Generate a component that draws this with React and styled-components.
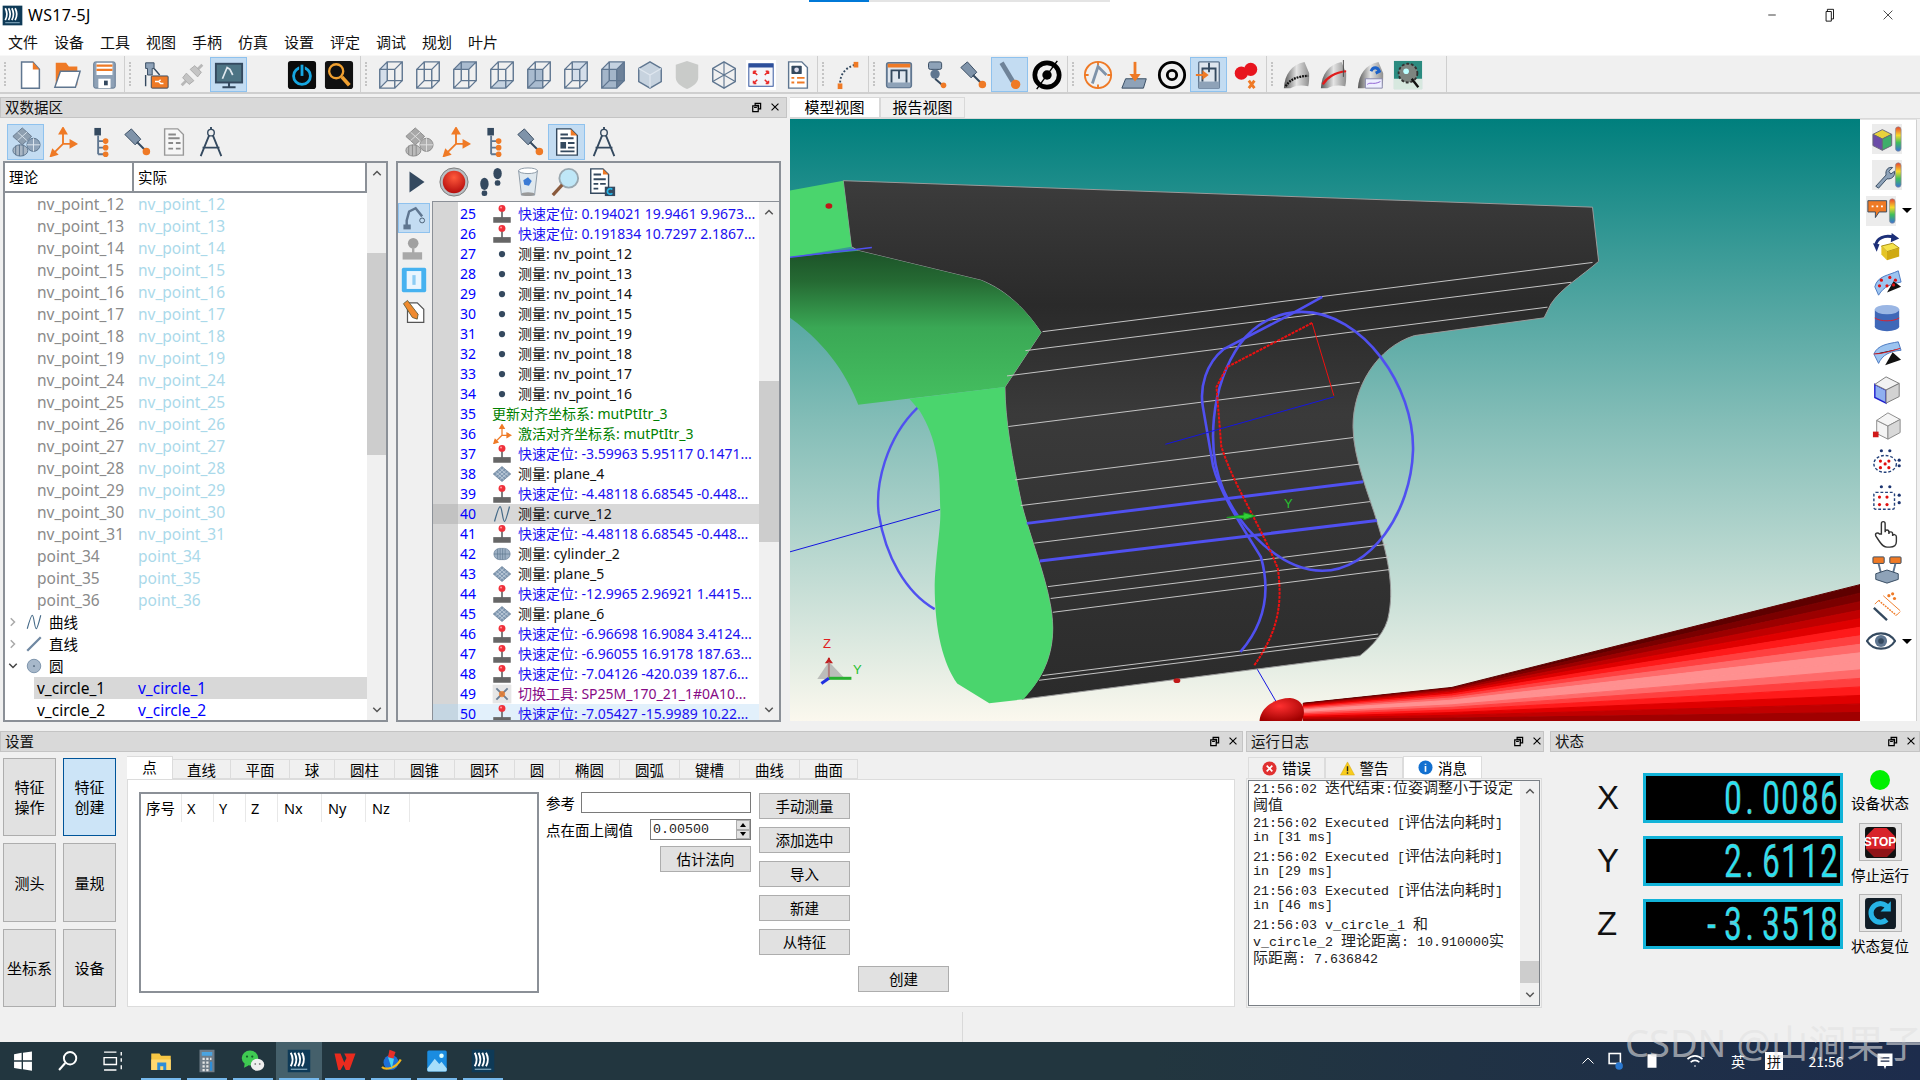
import React from 'react'
import styled, { createGlobalStyle } from 'styled-components'

const UI = `"Noto Sans","Noto Sans CJK SC",sans-serif`
const CJK = `"Noto Sans CJK SC","Noto Sans",sans-serif`
const MONO = `"Liberation Mono","Noto Sans CJK SC",monospace`
const SL = '#5f7690'
const SD = '#34495f'
const OR = '#ef7a26'

const Global = createGlobalStyle`
  * { box-sizing: border-box; }
  html, body { margin: 0; width: 1920px; height: 1080px; overflow: hidden; background: #f0f0f0; }
  body { font-family: ${UI}; color: #000; }
`

const cubeLines = <path d="M4 10h16v20H4zM12 2h16v20H12zM4 10l8-8M20 10l8-8M20 30l8-8M4 30l8-8" fill="none" stroke={SL} strokeWidth="1.5" />
const cube = (pts, fill = '#a9bbcf') => <>{pts && <polygon points={pts} fill={fill} />}{cubeLines}</>
const ws = (
  <>
    <rect x="1" y="1" width="30" height="30" fill="#0e3a57" />
    <path d="M5 5q5 9 0 18M10 5q5 9 0 18M15 5q5 9 0 18M20 5q5 9 0 18" fill="none" stroke="#fff" strokeWidth="2.6" />
    <path d="M5 27h22" stroke="#8fb4c9" strokeWidth="1.5" />
  </>
)
const pin = (
  <>
    <path d="M16 10v14" stroke="#777" strokeWidth="3" />
    <circle cx="16" cy="7" r="5.5" fill="#f0303a" />
    <circle cx="14.5" cy="5.5" r="1.6" fill="#ff9da0" />
    <rect x="2" y="21" width="28" height="9" fill="#666" />
  </>
)
const wave = <path d="M4 28C9 10 11 4 13 4c3 0 4 24 7 24 2 0 5-12 8-24" fill="none" stroke="#456a88" strokeWidth="2" />
const axes = <path d="M16 18V4M16 18l11 0M16 18L5 29M16 1l-3.5 6h7zM30 18l-6-3.5v7zM3 31l6.5-2-4.500-4.500z" fill={OR} stroke={OR} strokeWidth="2" />
const probe = (
  <>
    <path d="M3 8l7-6 10 11-6 6z" fill="#7f93a9" stroke={SD} strokeWidth="1" />
    <path d="M16 16l8 8" stroke={SD} strokeWidth="2" />
    <circle cx="26" cy="26" r="4" fill={OR} />
  </>
)
const machine = (
  <>
    <rect x="3" y="3" width="26" height="26" rx="2" fill="#dfe6ee" stroke={SL} strokeWidth="2" />
    <rect x="4" y="4" width="24" height="4" fill={OR} />
    <rect x="4" y="24" width="24" height="5" fill="#8ea2b8" />
    <path d="M8 24V11h16v13M16 11v9" fill="none" stroke={SD} strokeWidth="2" />
  </>
)
const plane = (
  <>
    <polygon points="16,4 30,16 16,28 2,16" fill="#7f97b0" stroke="#5c738c" />
    <path d="M9 10l14 12M12.500 7l14 12M5.500 13l14 12M23 10L9 22M19.500 7l-14 12M26.500 13l-14 12" stroke="#d8e2ec" strokeWidth="1" />
  </>
)
const rainbow = (x, y = 3, h = 26) => (
  <>
    <defs>
      <linearGradient id="rb" x1="0" y1="0" x2="0" y2="1">
        <stop offset="0" stopColor="#e8412f" /><stop offset=".35" stopColor="#f7d92c" /><stop offset=".65" stopColor="#3fbf5a" /><stop offset="1" stopColor="#3a6fd8" />
      </linearGradient>
    </defs>
    <rect x={x} y={y} width="6" height={h} rx="3" fill="url(#rb)" stroke="#8a8f96" strokeWidth=".7" />
  </>
)
const dots = (a) => a.map(([x, y, c], i) => <circle key={i} cx={x} cy={y} r="1.700" fill={c} />)
const bladeShape = 'M2 30C3 15 10 5 24 2l5 12c0 6 0 10-1 14-9-2-15 0-19 2z'

const icons = {
  fileNew: <><path d="M7 2h12l7 8v20H7z" fill="#fff" stroke={SL} strokeWidth="1.6" /><path d="M19 2v8h7z" fill={OR} /></>,
  fileOpen: <><path d="M4 3h11l3 4h9v20H4z" fill={OR} /><path d="M9 12h21l-5 17H3z" fill="#fff" stroke={SL} strokeWidth="1.5" /></>,
  save: <><rect x="5" y="2" width="23" height="28" rx="2" fill="#8ea1b6" stroke={SL} /><rect x="8" y="3" width="17" height="13" fill="#fff" /><path d="M8 6h17M8 10.500h17" stroke={OR} strokeWidth="2.400" /><rect x="10" y="20" width="13" height="10" fill="#fff" /><rect x="16" y="22" width="4" height="5" fill={SD} /></>,
  robotTool: <><path d="M6 3h9v6h-2v7H8V9H6z" fill="#8ea2b8" stroke={SD} /><path d="M6 16v12M15 9l6 7" stroke={SD} strokeWidth="1.500" /><rect x="12" y="17" width="18" height="13" rx="1" fill={OR} stroke={SD} /><path d="M16 23h4l2-2M20 23l2 2h3" stroke="#fff" strokeWidth="1.500" fill="none" /></>,
  plug: <><path d="M5 27l7-7M27 5l-7 7" stroke="#b8b8b8" strokeWidth="3" /><path d="M10 14l8 8-5 4-7-7zM22 18l-8-8 5-4 7 7z" fill="#c4c4c4" stroke="#aaa" /></>,
  monitor: <><rect x="2" y="4" width="28" height="20" fill="#4d7484" stroke={SD} strokeWidth="2" /><path d="M9 20l5-12 3 2 3 6" fill="none" stroke="#e0e8ee" strokeWidth="1.800" /><path d="M16 24v4M9 29h14" stroke={SD} strokeWidth="2.200" /></>,
  power: <><rect x="1" y="1" width="30" height="30" rx="3" fill="#0b0b0b" /><circle cx="16" cy="17" r="9" fill="none" stroke="#16a6e0" strokeWidth="3" /><path d="M16 5v13" stroke="#0b0b0b" strokeWidth="6" /><path d="M16 5v12" stroke="#16a6e0" strokeWidth="3" /></>,
  searchBlk: <><rect x="1" y="1" width="30" height="30" rx="3" fill="#111" /><circle cx="13" cy="12" r="7.500" fill="none" stroke="#f0a030" strokeWidth="2.500" /><path d="M19 18l8 9" stroke="#f0a030" strokeWidth="4" /></>,
  c1: cube('4,10 12,2 12,22 4,30', '#d4deea'),
  c2: cube(null),
  c3: cube('4,10 12,2 28,2 20,10'),
  c4: cube('4,30 12,22 28,22 20,30', '#c5d2e0'),
  c5: cube('4,10 20,10 20,30 4,30'),
  c6: cube('12,2 28,2 28,22 12,22', '#d4deea'),
  c7: <><polygon points="4,10 20,10 20,30 4,30" fill="#a3b5c9" /><polygon points="4,10 12,2 28,2 20,10" fill="#c5d2e0" /><polygon points="20,10 28,2 28,22 20,30" fill="#6d8199" />{cubeLines}</>,
  hex: <><polygon points="16,2 28,9 28,23 16,30 4,23 4,9" fill="#c7d3df" stroke={SL} strokeWidth="1.500" /><path d="M4 9l12 7 12-7M16 16v14" stroke="#dfe7ef" strokeWidth="1.200" fill="none" /></>,
  shield: <path d="M16 1l12 4v14c0 6-7 10-12 12C11 29 4 25 4 19V5z" fill="#c9cbc9" />,
  wire: <><polygon points="16,2 28,9 28,23 16,30 4,23 4,9" fill="none" stroke={SL} strokeWidth="1.500" /><path d="M4 9l24 14M28 9L4 23M16 2v28" stroke={SL} strokeWidth="1.200" /></>,
  full: <><rect x="0" y="0" width="32" height="32" fill="#fff" /><rect x="3" y="4" width="26" height="24" fill="#f4f6fb" stroke="#2d4f9b" /><rect x="3" y="4" width="26" height="4" fill="#2d4f9b" /><path d="M8 12l4 4M8 12h3M8 12v3M24 12l-4 4M24 12h-3M24 12v3M8 25l4-4M8 25h3M8 25v-3M24 25l-4-4M24 25h-3M24 25v-3" stroke="#e82b2b" strokeWidth="1.600" fill="none" /></>,
  camDoc: <><path d="M6 2h14l6 6v22H6z" fill="#fff" stroke={SL} strokeWidth="1.500" /><rect x="9" y="6" width="11" height="9" rx="1" fill={SD} /><circle cx="14.500" cy="10.500" r="2.500" fill="#dde" /><path d="M9 19h3M15 19h8M9 24h3M15 24h8" stroke={OR} strokeWidth="2" /></>,
  curve: <><path d="M8 28C6 18 12 8 24 5" fill="none" stroke={SD} strokeWidth="2" strokeDasharray="2 2" /><rect x="22" y="2" width="5" height="6" fill={OR} /><rect x="5" y="25" width="5" height="6" fill={OR} /></>,
  machine,
  head: <><rect x="8" y="2" width="14" height="8" rx="2" fill="#8ea2b8" stroke={SD} /><circle cx="15" cy="15" r="5" fill="#5f7690" /><path d="M15 20l8 7" stroke={SD} strokeWidth="2" /><circle cx="24" cy="27" r="3" fill={OR} /></>,
  probe,
  stylus: <><path d="M7 3l12 20" stroke="#6f8399" strokeWidth="5" /><circle cx="22" cy="26" r="5" fill={OR} /></>,
  eyeBlk: <><ellipse cx="16" cy="16" rx="13" ry="13" fill="none" stroke="#000" strokeWidth="5" /><circle cx="16" cy="16" r="5" fill="#000" /><path d="M5 31L27 1" stroke="#000" strokeWidth="1.500" /></>,
  arc: <><circle cx="16" cy="16" r="14" fill="none" stroke={OR} strokeWidth="2" /><path d="M2 16h4M26 16h4M16 2v4M16 26v4" stroke={OR} strokeWidth="2" /><path d="M10 25L16 7l9 9" fill="none" stroke="#7f93a9" strokeWidth="3" /></>,
  sink: <><polygon points="6,20 28,20 25,30 2,30" fill="#8ea2b8" stroke={SD} /><path d="M16 2v18" stroke={OR} strokeWidth="3" /><path d="M10 15h12l-6 8z" fill={OR} /></>,
  target: <><circle cx="16" cy="16" r="13.500" fill="none" stroke="#000" strokeWidth="3" /><circle cx="16" cy="16" r="5" fill="none" stroke="#000" strokeWidth="3" /></>,
  machArrow: <><rect x="5" y="2" width="22" height="28" rx="1" fill="#dfe6ee" stroke={SL} strokeWidth="1.500" /><rect x="5" y="23" width="22" height="7" fill="#8ea2b8" /><path d="M9 23V9h14v14M16 3v10" fill="none" stroke={SD} strokeWidth="2" /><path d="M2 16h12M14 16l-4-3v6z" stroke={OR} strokeWidth="2" fill={OR} /></>,
  redDots: <><circle cx="11" cy="14" r="7" fill="#e8151f" /><circle cx="21" cy="10" r="7" fill="#e8151f" /><path d="M19 22l6 8M25 22l-6 8" stroke={OR} strokeWidth="3" /></>,
  blade1: <><defs><linearGradient id="bd" x1="0" y1="0" x2="1" y2="0"><stop offset="0" stopColor="#555" /><stop offset=".5" stopColor="#e4e4e4" /><stop offset="1" stopColor="#8f8f8f" /></linearGradient></defs><path d={bladeShape} fill="url(#bd)" /><path d="M4 28c4-7 13-11 24-11" stroke="#111" strokeWidth="2.400" fill="none" strokeDasharray="2 1" /></>,
  blade2: <><path d={bladeShape} fill="url(#bd)" /><path d="M4 26c4-7 13-13 25-14" stroke="#e01c1c" strokeWidth="2.400" fill="none" /><path d="M26 0v18" stroke="#444" /></>,
  blade3: <><path d={bladeShape} fill="url(#bd)" /><path d="M10 20h18v10H10z" fill="#eef" stroke="#88a" /><path d="M16 12c2-5 7-5 9 0l-4 2" fill="none" stroke="#1d62c8" strokeWidth="3" /><path d="M12 26c4-3 6 1 14-3" fill="none" stroke="#8a5ad0" /></>,
  cutter: <><rect x="1" y="1" width="30" height="30" fill="#2b8b80" /><rect x="1" y="20" width="30" height="11" fill="#d7e8df" /><circle cx="16" cy="14" r="10" fill="#7d8580" stroke="#333" strokeWidth="2" strokeDasharray="3 2" /><circle cx="14" cy="12" r="3" fill="#bff" /><path d="M20 20l7 9" stroke="#111" strokeWidth="2.500" /></>,
  data: <><polygon points="12,1 22,10 12,19 2,10" fill="#8e9fb0" stroke="#66788c" /><path d="M7 5.500l10 9M17 5.500l-10 9" stroke="#d8e2ec" /><circle cx="24" cy="19" r="7" fill="#8ea2b8" stroke="#5c738c" /><path d="M17 19h14M24 12v14" stroke="#dfe7ef" /><ellipse cx="10" cy="25" rx="8" ry="6" fill="#a9b6c4" stroke="#5c738c" /><path d="M5 20v10M9 19v12M13 19v12" stroke="#5c738c" /></>,
  dataOff: <><polygon points="12,1 22,10 12,19 2,10" fill="#a8a8a8" stroke="#8a8a8a" /><path d="M7 5.500l10 9M17 5.500l-10 9" stroke="#e0e0e0" /><circle cx="24" cy="19" r="7" fill="#b0b0b0" stroke="#8a8a8a" /><path d="M17 19h14M24 12v14" stroke="#e0e0e0" /><ellipse cx="10" cy="25" rx="8" ry="6" fill="#bbb" stroke="#8a8a8a" /><path d="M5 20v10M9 19v12M13 19v12" stroke="#8a8a8a" /></>,
  axes,
  tree: <><rect x="10" y="1" width="7" height="8" fill={SD} /><path d="M14 9v20M14 15h7M14 22h7M14 29h7" stroke={SL} strokeWidth="2" /><circle cx="22" cy="15" r="3" fill={OR} /><circle cx="22" cy="22" r="3" fill={OR} /><circle cx="22" cy="29" r="3" fill={OR} /></>,
  reportOff: <><path d="M6 2h14l6 6v22H6z" fill="#f6f6f6" stroke="#999" strokeWidth="1.500" /><path d="M10 8h8M10 12h12M10 17h5M18 17h5M10 23h5M18 23h5" stroke="#888" strokeWidth="2" /></>,
  report: <><path d="M5 2h15l7 7v21H5z" fill="#fff" stroke={SD} strokeWidth="1.500" /><path d="M20 2v7h7z" fill={OR} /><path d="M9 8h8M9 12h14M17 17h7M17 22h7M9 26h15" stroke={SD} strokeWidth="2" /><rect x="9" y="16" width="6" height="7" fill={SD} /></>,
  compass: <><circle cx="16" cy="6" r="3.500" fill="none" stroke={SD} strokeWidth="1.500" /><path d="M16 2v-2M14 9L5 31M18 9l9 22M7 22h18" stroke={SD} strokeWidth="2" fill="none" /></>,
  play: <path d="M6 2l20 14L6 30z" fill={SD} />,
  record: <><defs><radialGradient id="rc" cx=".5" cy=".3" r=".7"><stop offset="0" stopColor="#ff5a3c" /><stop offset="1" stopColor="#b50d0d" /></radialGradient></defs><circle cx="16" cy="16" r="15" fill="#b9c0c4" stroke="#777" /><circle cx="16" cy="16" r="12" fill="url(#rc)" /></>,
  steps: <><ellipse cx="9" cy="18" rx="4.500" ry="6.500" fill={SD} /><rect x="6" y="25" width="6" height="6" rx="2.500" fill={SD} /><ellipse cx="23" cy="7" rx="4.500" ry="6" fill={SD} /><rect x="20" y="14" width="6" height="6" rx="2.500" fill={SD} /></>,
  trash: <><path d="M6 4h20l-3 26H9z" fill="#dfe8ee" stroke="#8a98a4" /><ellipse cx="16" cy="4" rx="10" ry="3" fill="#fff" stroke="#8a98a4" /><path d="M11 14l5-3 4 4-3 5-5-1z" fill="#3a7bd5" /><ellipse cx="16" cy="29" rx="7" ry="2" fill="#999" /></>,
  mag: <><circle cx="20" cy="12" r="10" fill="#bfe7f7" stroke="#9aa8b0" strokeWidth="2" /><path d="M13 19L3 30" stroke="#8a5a3c" strokeWidth="3.500" /></>,
  docC: <><path d="M4 2h13l6 6v20H4z" fill="#fff" stroke={SD} strokeWidth="1.500" /><path d="M17 2v6h6z" fill={OR} /><path d="M7 8h8M7 13h13M7 18h5M14 18h6M7 23h5" stroke={SD} strokeWidth="2" /><rect x="19" y="21" width="11" height="10" fill={SD} /><path d="M27 24a3 3 0 1 0 0 4" fill="none" stroke="#26b6e8" strokeWidth="1.800" /></>,
  robot: <><path d="M7 28V19L10 8l8-4 8 10" fill="none" stroke={SL} strokeWidth="3" /><rect x="3" y="24" width="9" height="6" fill={SL} /><circle cx="26" cy="19" r="3" fill="none" stroke={SD} /></>,
  joy: <><circle cx="15" cy="9" r="6.500" fill="#a0a0a0" /><path d="M15 14v8" stroke="#aaa" strokeWidth="3" /><rect x="2" y="20" width="24" height="9" fill="#a8a8a8" /></>,
  note: <><rect x="1" y="1" width="30" height="30" rx="2" fill="#46b2f0" /><rect x="7" y="5" width="18" height="22" fill="#eaf6fe" /><rect x="14" y="10" width="4" height="12" fill="#8ccdf4" /></>,
  pencil: <><path d="M8 6h12l8 8v16H8z" fill="#fff" stroke="#555" strokeWidth="1.500" /><path d="M3 7l5-4 13 17-1 6-6-2z" fill="#ef8a2e" stroke="#553" /></>,
  dot: <circle cx="16" cy="16" r="5" fill={SD} />,
  plane,
  wave,
  line: <path d="M4 28L28 4" stroke="#6f88a2" strokeWidth="4" />,
  disc: <><circle cx="16" cy="16" r="12" fill="#a7b8ca" stroke="#6f88a2" strokeWidth="1.500" /><circle cx="16" cy="16" r="1.500" fill={SD} /></>,
  pin,
  cyl: <><rect x="3" y="7" width="26" height="18" rx="9" fill="#9db0c4" stroke={SL} /><path d="M9 8v16M13 7v18M17 7v18M21 8v16M3 16h26" stroke="#5c738c" /></>,
  swap: <><rect x="1" y="1" width="30" height="30" fill="#e6e6e6" /><path d="M7 7l18 18M25 7L7 25" stroke="#6c7f94" strokeWidth="3" /><circle cx="16" cy="16" r="5" fill={OR} opacity=".8" /></>,
  colorCube: <><polygon points="11,6 21,11 11,16 1,11" fill="#e8d23c" stroke="#667" /><polygon points="1,11 11,16 11,28 1,23" fill="#6b4ca8" stroke="#667" /><polygon points="21,11 11,16 11,28 21,23" fill="#3fae6a" stroke="#667" />{rainbow(25)}</>,
  wrench: <><path d="M4 28l11-12c-1-5 2-9 7-8l-4 4 2 3 4-3c1 5-3 9-8 8L7 30z" fill="#8ea2b8" stroke={SD} />{rainbow(25)}</>,
  chat: <><path d="M2 5h20v12h-8l-4 6v-6H2z" fill={OR} stroke={SD} /><path d="M6 11h2M11 11h2M16 11h2" stroke="#fff" strokeWidth="2" />{rainbow(25)}</>,
  rotate: <><polygon points="10,15 22,12 29,17 16,21" fill="#f5e24a" stroke="#a58a10" /><polygon points="10,15 16,21 16,30 10,24" fill="#e4c426" /><polygon points="16,21 29,17 29,26 16,30" fill="#cfa912" /><path d="M4 15C4 7 14 2 24 6" fill="none" stroke="#1c2f78" strokeWidth="3" /><path d="M21 1l8 6-9 4zM1 12l7 1-3 8z" fill="#1c2f78" /></>,
  ptsSurf: <><path d="M3 20C6 8 18 8 28 3l3 12c-10 2-18 4-24 14z" fill="#9cc4f0" stroke="#4a78c0" /><path d="M16 26l15-6-8-6z" fill="#111" />{dots([[10,13,'#e01010'],[19,10,'#e01010'],[25,13,'#e01010'],[8,19,'#e01010'],[16,19,'#e01010'],[23,18,'#e01010']])}</>,
  cyl2: <><rect x="3" y="7" width="26" height="18" fill="#3f68b8" /><ellipse cx="16" cy="25" rx="13" ry="5" fill="#3f68b8" /><ellipse cx="16" cy="7" rx="13" ry="5" fill="#9ab6e4" /><path d="M3 16c6 4 20 4 26 0" fill="none" stroke="#e0202a" /></>,
  surf: <><path d="M2 16C6 6 18 5 28 3l3 9c-12 1-20 5-24 14z" fill="#9cc4f0" stroke="#4a78c0" /><path d="M2 16c8 0 18-3 28-6" stroke="#e0202a" /><path d="M14 28l17-6-9-8z" fill="#111" /></>,
  boxFace: <><polygon points="3,10 15,16 15,30 3,24" fill="#8fb0f0" stroke="#2020d0" strokeWidth="1.500" /><polygon points="15,2 29,9 15,16 3,10" fill="#f2f2f2" stroke="#777" /><polygon points="29,9 15,16 15,30 29,23" fill="#d2d2d2" stroke="#777" /></>,
  boxPt: <><polygon points="5,10 17,16 17,30 5,24" fill="#f4f4f4" stroke="#888" /><polygon points="17,2 30,9 17,16 5,10" fill="#f5f5f5" stroke="#888" /><polygon points="30,9 17,16 17,30 30,23" fill="#d8d8d8" stroke="#888" /><rect x="1" y="22" width="6" height="6" fill="#d01818" /></>,
  dotsEll: <><ellipse cx="14" cy="18" rx="12" ry="9" fill="none" stroke="#24417a" strokeWidth="1.500" strokeDasharray="3 2" />{dots([[10,4,'#1c3470'],[19,4,'#1c3470'],[29,14,'#1c3470'],[29,20,'#1c3470'],[9,15,'#e01010'],[18,15,'#e01010'],[9,22,'#e01010'],[18,22,'#e01010'],[14,18,'#e01010']])}</>,
  dotsRect: <><rect x="2" y="10" width="22" height="18" rx="2" fill="none" stroke="#24417a" strokeWidth="1.500" strokeDasharray="3 2" />{dots([[10,4,'#1c3470'],[19,4,'#1c3470'],[29,13,'#1c3470'],[29,21,'#1c3470'],[8,15,'#e01010'],[16,15,'#e01010'],[8,23,'#e01010'],[16,23,'#e01010']])}</>,
  hand: <path d="M10 16V5c0-3 4-3 4 0v9c0-3 4-3 4 0v2c0-3 4-3 4 0v2c0-2 4-2 4 1v5c0 4-3 6-7 6h-3c-4 0-6-3-8-6l-4-6c-1-3 2-4 4-2z" fill="#fff" stroke="#333" strokeWidth="1.500" />,
  boxTags: <><rect x="1" y="2" width="12" height="7" rx="1" fill={OR} stroke={SD} /><rect x="19" y="2" width="12" height="7" rx="1" fill={OR} stroke={SD} /><path d="M7 9l3 12M25 9l-3 12" stroke={SL} strokeWidth="2" /><polygon points="4,20 16,16 28,20 28,26 16,30 4,26" fill="#8ea2b8" stroke={SD} /></>,
  measure: <><path d="M2 18l14 13" stroke={SD} strokeWidth="2.500" /><path d="M12 5l18 16M3 14l4-4M26 26l4-4" stroke={OR} fill="none" /><path d="M7 10l19 16" stroke={OR} strokeWidth="1.500" strokeDasharray="2 1" />{dots([[18,5,OR],[24,8,OR],[22,3,OR]])}</>,
  eye: <><path d="M1 16C8 5 24 5 31 16 24 27 8 27 1 16z" fill="#fff" stroke={SD} strokeWidth="2.400" /><circle cx="16" cy="16" r="6.500" fill="#5f7690" /><circle cx="16" cy="16" r="3" fill={SD} /></>,
  err: <><circle cx="16" cy="16" r="15" fill="#e03030" /><path d="M10 10l12 12M22 10L10 22" stroke="#fff" strokeWidth="3.500" /></>,
  warn: <><path d="M16 2l15 28H1z" fill="#f8cc1c" stroke="#cfa514" /><path d="M16 11v11M16 24v3" stroke="#222" strokeWidth="3" /></>,
  info: <><circle cx="16" cy="16" r="15" fill="#1270d0" /><path d="M16 8v2M16 13v12" stroke="#fff" strokeWidth="3.500" /></>,
  stop: <><rect x="1" y="1" width="30" height="30" rx="3" fill="#111" /><polygon points="10,2 22,2 30,10 30,22 22,30 10,30 2,22 2,10" fill="#d8232a" /><path d="M2 22l8 8h12l8-8z" fill="#8f1216" /></>,
  reset: <><rect x="1" y="1" width="30" height="30" rx="3" fill="#101c26" /><path d="M22 22a9 9 0 1 1 1-12" fill="none" stroke="#27b4e6" strokeWidth="5" /><path d="M26 4v10H16z" fill="#27b4e6" /></>,
  ws,
  winLogo: <path d="M3 6l11-2v11H3zM16 4l13-2v13H16zM3 17h11v11L3 26zM16 17h13v13l-13-2z" fill="#fff" />,
  tbSearch: <><circle cx="19" cy="12" r="9" fill="none" stroke="#fff" strokeWidth="2.800" /><path d="M12 19L3 29" stroke="#fff" strokeWidth="3" /></>,
  taskView: <path d="M3 3h18M3 29h18M3 11h18v10H3zM28 3v5M28 12v5M28 22v6" fill="none" stroke="#fff" strokeWidth="2" />,
  folder: <><path d="M3 6h11l2 3h13v19H3z" fill="#f7c744" /><rect x="3" y="14" width="26" height="14" fill="#ffd970" /><rect x="11" y="18" width="12" height="10" fill="#2e8ed8" /><rect x="15" y="23" width="4" height="5" fill="#ffd970" /></>,
  calc: <><rect x="6" y="1" width="20" height="30" fill="#6f7c88" /><rect x="9" y="4" width="14" height="5" fill="#4aa3e0" /><path d="M10 13h3M15 13h3M20 13h2M10 18h3M15 18h3M10 23h3M15 23h3M10 28h3M15 28h3" stroke="#e5e5e5" strokeWidth="3" /><rect x="20" y="17" width="3" height="12" fill="#2e8ed8" /></>,
  wechat: <><ellipse cx="12" cy="12" rx="11" ry="10" fill="#3fca52" /><path d="M5 19l-1 6 6-3z" fill="#3fca52" /><ellipse cx="22" cy="21" rx="9" ry="8" fill="#eee" /><circle cx="8" cy="10" r="1.500" fill="#14602a" /><circle cx="15" cy="10" r="1.500" fill="#14602a" /><circle cx="19" cy="20" r="1.200" fill="#888" /><circle cx="25" cy="20" r="1.200" fill="#888" /></>,
  wps: <path d="M2 6h8l5 12 3-6-3-6h15L22 28h-5l-3-7-4 7H7z" fill="#ea2b1e" />,
  app: <><circle cx="16" cy="18" r="10" fill="#1d6fd8" /><path d="M4 24c4 4 18 3 25-10" fill="none" stroke="#f2b61c" strokeWidth="3" /><path d="M14 1l8 3-3 9-7-2z" fill="#e8302a" /><path d="M12 11l8 2-3 13z" fill="#4ad4f0" /></>,
  photos: <><rect x="3" y="2" width="26" height="28" rx="2" fill="#1a8ce0" /><circle cx="22" cy="9" r="3" fill="#dff" /><path d="M3 26l10-13 6 7 3-3 7 9v2a2 2 0 0 1-2 2H5a2 2 0 0 1-2-2z" fill="#a7defa" /></>,
  chev: <path d="M6 22l10-10 10 10" fill="none" stroke="currentColor" strokeWidth="4" />,
  chevD: <path d="M6 10l10 10 10-10" fill="none" stroke="currentColor" strokeWidth="4" />,
  chevR: <path d="M10 6l10 10-10 10" fill="none" stroke="currentColor" strokeWidth="4" />,
  float: <path d="M12 4h16v16h-6v-10H12zM5 11h16v17H5zM9 16h8" fill="none" stroke="#000" strokeWidth="3.500" />,
  close: <path d="M5 5l22 22M27 5L5 27" fill="none" stroke="#000" strokeWidth="3.500" />,
  restore: <path d="M10 8V3h14v22h-5M7 8h12v22H7z" fill="none" stroke="#000" strokeWidth="2" />,
  minimize: <path d="M6 16h20" stroke="#000" strokeWidth="2" />,
  thinClose: <path d="M6 6l20 20M26 6L6 26" stroke="#000" strokeWidth="1.600" />,
  trayUp: <path d="M5 21l11-11 11 11" fill="none" stroke="#fff" strokeWidth="2" />,
  trayNet: <><rect x="5" y="4" width="18" height="16" fill="none" stroke="#fff" strokeWidth="2.500" /><circle cx="21" cy="24" r="6" fill="#2a78d0" /></>,
  trayDoc: <rect x="8" y="4" width="16" height="24" fill="#fff" />,
  trayWifi: <path d="M4 13c7-7 17-7 24 0M9 18c4-4 10-4 14 0M15 24h2" fill="none" stroke="#fff" strokeWidth="2.500" />,
  trayMsg: <><path d="M4 4h24v20H18l-2 5-2-5H4z" fill="#fff" /><path d="M9 11h14M9 16h14" stroke="#1c2b4a" strokeWidth="2" /></>,
}

const Svg = styled.svg`
  display: block;
  flex: none;
`
const Ico = ({ n, s = 30 }) => <Svg width={s} height={s} viewBox="0 0 32 32">{icons[n]}</Svg>

const Screen = styled.div`
  position: relative;
  width: 1920px;
  height: 1080px;
  display: flex;
  flex-direction: column;
  overflow: hidden;
`
const ProgressLine = styled.div`
  position: absolute;
  left: 809px;
  top: 0;
  width: 301px;
  height: 2px;
  background: linear-gradient(90deg, #0078d7 0 60px, #e4e4e4 60px);
`
const TitleBar = styled.div`
  height: 30px;
  flex: none;
  background: #fff;
  display: flex;
  align-items: center;
  padding-left: 2px;
  gap: 5px;
`
const AppName = styled.span`
  font: 16px ${UI};
  letter-spacing: .3px;
`
const WinBtns = styled.div`
  margin-left: auto;
  padding-right: 3px;
  display: flex;
`
const WinBtn = styled.div`
  width: 58px;
  height: 30px;
  display: flex;
  align-items: center;
  justify-content: center;
`
const MenuBar = styled.div`
  height: 25px;
  flex: none;
  background: #fff;
  display: flex;
`
const MenuItem = styled.div`
  width: 46px;
  padding-left: 8px;
  font: 15px/24px ${CJK};
  color: #111;
`
const Toolbar = styled.div`
  height: 39px;
  flex: none;
  background: #f0f0f0;
  border-top: 1px solid #f8f8f8;
  border-bottom: 2px solid #cfcfcf;
  display: flex;
  margin-bottom: 3px;
`
const ToolGroup = styled.div`
  display: flex;
  align-items: center;
  padding: 1px 0 0 11px;
  border-right: 1px solid #cfcfcf;
  width: ${(p) => p.$w}px;
  flex: none;
  position: relative;
  &::before {
    content: '';
    position: absolute;
    left: 4px;
    top: 6px;
    bottom: 6px;
    border-left: 2px dotted #c4c4c4;
  }
`
const ToolBtn = styled.div`
  width: 37px;
  height: 35px;
  flex: none;
  display: flex;
  align-items: center;
  justify-content: center;
  background: ${(p) => (p.$on ? '#c3dcf2' : 'transparent')};
  border: 1px solid ${(p) => (p.$on ? '#8fc2ee' : 'transparent')};
`
const ToolGap = styled.div`
  width: 36px;
  flex: none;
`
const Main = styled.div`
  height: 634px;
  flex: none;
  display: flex;
`
const LeftDock = styled.div`
  width: 787px;
  flex: none;
  display: flex;
  flex-direction: column;
`
const DockBar = styled.div`
  height: 21px;
  flex: none;
  background: #d9d9d9;
  border: 1px solid #c4c4c4;
  display: flex;
  align-items: center;
  gap: 8px;
  padding: 0 ${(p) => p.$r}px 1px 4px;
  font: 14.500px/18px ${CJK};
  color: #111;
`
const DockTitle = styled.span`
  margin-right: auto;
`
const DualRow = styled.div`
  flex: 1;
  min-height: 0;
  display: flex;
  gap: 8px;
  padding: 4px 6px 9px 3px;
`
const DataPanel = styled.div`
  width: 385px;
  flex: none;
  display: flex;
  flex-direction: column;
`
const IconBar = styled.div`
  height: 38px;
  flex: none;
  display: flex;
  align-items: center;
  padding: 2px 0 0 4px;
`
const IconBtn = styled.div`
  width: 37px;
  height: 36px;
  flex: none;
  display: flex;
  align-items: center;
  justify-content: center;
  background: ${(p) => (p.$on ? '#c3dcf2' : 'transparent')};
  border: 1px solid ${(p) => (p.$on ? '#8fc2ee' : 'transparent')};
`
const Framed = styled.div`
  flex: 1;
  min-height: 0;
  margin-top: 1px;
  border: 2px solid #8b9097;
  display: flex;
  background: #fff;
`
const FramedCol = styled(Framed)`
  flex-direction: column;
  background: #f0f0f0;
`
const TreeMain = styled.div`
  flex: 1;
  min-width: 0;
  display: flex;
  flex-direction: column;
  overflow: hidden;
`
const TreeHead = styled.div`
  height: 30px;
  flex: none;
  display: flex;
  border-bottom: 2px solid #8b9097;
`
const HeadCell = styled.div`
  width: ${(p) => p.$w}px;
  flex: ${(p) => (p.$w ? 'none' : '1')};
  border-right: 2px solid #8b9097;
  padding-left: 4px;
  font: 14.500px/28px ${CJK};
`
const TreeRow = styled.div`
  height: 22px;
  flex: none;
  display: flex;
  align-items: center;
  margin-left: 29px;
  background: ${(p) => (p.$sel ? '#d8d8d8' : 'transparent')};
  font: 15.500px/22px ${UI};
`
const TreeName = styled.span`
  width: 104px;
  flex: none;
  padding-left: 3px;
  color: ${(p) => (p.$dim ? '#8a8a8a' : '#000')};
`
const TreeReal = styled.span`
  color: ${(p) => (p.$dim ? '#aad9ea' : '#0000ff')};
`
const GroupRow = styled.div`
  height: 22px;
  flex: none;
  display: flex;
  align-items: center;
  padding-left: 2px;
  gap: 6px;
  font: 14.500px/22px ${CJK};
`
const Chevron = styled.span`
  color: ${(p) => (p.$open ? '#444' : '#aaa')};
  display: block;
`
const Track = styled.div`
  width: ${(p) => p.$w}px;
  flex: none;
  background: #f0f0f0;
  display: flex;
  flex-direction: column;
  color: #555;
`
const Arrow = styled.div`
  height: 20px;
  flex: none;
  display: flex;
  align-items: center;
  justify-content: center;
  margin-top: ${(p) => (p.$end ? 'auto' : '0')};
`
const Thumb = styled.div`
  margin-top: ${(p) => p.$top}px;
  height: ${(p) => p.$h}px;
  flex: none;
  background: #cdcdcd;
`
const PlayBar = styled.div`
  height: 38px;
  flex: none;
  display: flex;
  align-items: center;
`
const PlayBtn = styled.div`
  width: 37px;
  height: 34px;
  flex: none;
  display: flex;
  align-items: center;
  justify-content: center;
`
const ProgramRow = styled.div`
  flex: 1;
  min-height: 0;
  display: flex;
`
const SideStrip = styled.div`
  width: 34px;
  flex: none;
  display: flex;
  flex-direction: column;
  align-items: flex-start;
  padding-top: 2px;
  gap: 1px;
`
const StripBtn = styled.div`
  width: 32px;
  height: 30px;
  flex: none;
  display: flex;
  align-items: center;
  justify-content: center;
  background: ${(p) => (p.$on ? '#c3dcf2' : 'transparent')};
  border: 1px solid ${(p) => (p.$on ? '#8fc2ee' : 'transparent')};
`
const ProgramBox = styled.div`
  flex: 1;
  min-width: 0;
  display: flex;
  border-left: 1px solid #8b9097;
  border-top: 1px solid #8b9097;
  background: #fff;
`
const ProgramList = styled.div`
  flex: 1;
  min-width: 0;
  overflow: hidden;
  padding-top: 2px;
  background: linear-gradient(90deg, #d6d6d6 25px, #fff 25px);
`
const StepRow = styled.div`
  height: 20px;
  display: flex;
  align-items: center;
  background: ${(p) => (p.$sel ? '#d8d8d8' : p.$cur ? '#e2f0fb' : 'transparent')};
  font: 14px/20px ${UI};
  white-space: nowrap;
`
const Gutter = styled.div`
  width: 25px;
  height: 20px;
  flex: none;
  background: ${(p) => (p.$sel ? '#c2c2c2' : p.$cur ? '#c5d6e2' : 'transparent')};
`
const StepNo = styled.span`
  width: 30px;
  flex: none;
  padding-left: 2px;
  color: #0000ff;
`
const StepIcon = styled.span`
  width: 30px;
  flex: none;
  display: flex;
  justify-content: center;
  padding-right: 2px;
`
const StepText = styled.span`
  color: ${(p) => ({ move: '#1a10f0', align: '#008000', tool: '#860a86' }[p.$k] || '#111')};
  padding-left: ${(p) => (p.$bare ? 4 : 0)}px;
`
const CenterDock = styled.div`
  flex: 1;
  min-width: 0;
  display: flex;
  flex-direction: column;
  padding-left: 3px;
`
const ViewTabs = styled.div`
  height: 22px;
  flex: none;
  display: flex;
  border-bottom: 1px solid #d9d9d9;
`
const ViewTab = styled.div`
  width: ${(p) => p.$w}px;
  text-align: center;
  font: 15px/18px ${CJK};
  background: ${(p) => (p.$on ? '#fff' : '#f0f0f0')};
  border: 1px solid #d9d9d9;
  border-left: ${(p) => (p.$on ? 'none' : '1px solid #d9d9d9')};
`
const ViewRow = styled.div`
  height: 602px;
  flex: none;
  display: flex;
`
const Viewport = styled.div`
  width: 1070px;
  flex: none;
  position: relative;
  overflow: hidden;
`
const ViewSvg = styled.svg`
  display: block;
  width: 1070px;
  height: 602px;
  & * { vector-effect: non-scaling-stroke; }
`
const AxisLabel = styled.span`
  position: absolute;
  left: ${(p) => p.$x}px;
  top: ${(p) => p.$y}px;
  font: 13px/14px "Liberation Sans", sans-serif;
  color: ${(p) => p.$c};
`
const RightBar = styled.div`
  width: 57px;
  flex: none;
  background: #fff;
  border-right: 1px solid #d0d0d0;
  border-top: 1px solid #e4e4e4;
  display: flex;
  flex-direction: column;
  align-items: flex-start;
  padding: 1px 0 0 12px;
`
const RightItem = styled.div`
  height: 35.900px;
  flex: none;
  display: flex;
  align-items: center;
  gap: 6px;
  margin-left: ${(p) => (p.$left ? -6 : 0)}px;
`
const IconTint = styled.div`
  background: ${(p) => (p.$tint ? '#ececec' : 'transparent')};
`
const Caret = styled.span`
  width: 0;
  height: 0;
  border-left: 5px solid transparent;
  border-right: 5px solid transparent;
  border-top: 5px solid #000;
`
const Bottom = styled.div`
  height: 311px;
  flex: none;
  display: flex;
`
const SettingsDock = styled.div`
  width: 1243px;
  flex: none;
  display: flex;
  flex-direction: column;
`
const SettingsBody = styled.div`
  flex: 1;
  display: flex;
  padding: 6px 0 0 3px;
  position: relative;
`
const StatusDivider = styled.div`
  position: absolute;
  left: 962px;
  top: 260px;
  bottom: 0;
  border-left: 1px solid #d9d9d9;
`
const CategoryGrid = styled.div`
  width: 113px;
  flex: none;
  display: grid;
  grid-template-columns: 53px 53px;
  grid-template-rows: 78px 79px 78px;
  gap: 7px;
  align-content: start;
`
const CategoryBtn = styled.div`
  display: flex;
  align-items: center;
  justify-content: center;
  text-align: center;
  font: 15px/20px ${CJK};
  background: ${(p) => (p.$on ? '#cce4f7' : '#e1e1e1')};
  border: 1px solid ${(p) => (p.$on ? '#005499' : '#adadad')};
`
const TabWidget = styled.div`
  margin-left: 11px;
  width: 1108px;
  display: flex;
  flex-direction: column;
`
const TabRow = styled.div`
  display: flex;
  height: 22px;
  flex: none;
  margin-top: -1px;
  align-items: flex-end;
`
const FeatureTab = styled.div`
  width: ${(p) => p.$w}px;
  height: ${(p) => (p.$on ? 23 : 20)}px;
  text-align: center;
  font: 14.500px/19px ${CJK};
  background: ${(p) => (p.$on ? '#fff' : '#f0f0f0')};
  border: 1px solid #dcdcdc;
  border-bottom: ${(p) => (p.$on ? 'none' : '1px solid #dcdcdc')};
  border-left: none;
`
const TabPanel = styled.div`
  height: 228px;
  flex: none;
  background: #fff;
  border: 1px solid #dcdcdc;
  display: flex;
  padding: 12px 0 0 11px;
  position: relative;
`
const FeatureTable = styled.div`
  width: 400px;
  height: 201px;
  flex: none;
  border: 2px solid #8b9097;
  display: flex;
  align-items: flex-start;
`
const ColHead = styled.div`
  width: ${(p) => p.$w}px;
  height: 28px;
  flex: none;
  padding-left: ${(p) => p.$pad ?? 5}px;
  border-right: 1px solid #e8e8e8;
  font: 14.500px/28px ${UI};
`
const FormCol = styled.div`
  width: 205px;
  margin-left: 7px;
  flex: none;
  display: flex;
  flex-direction: column;
`
const FormRow = styled.div`
  display: flex;
  align-items: center;
  height: 21px;
  margin-bottom: 6px;
  justify-content: space-between;
  font: 14.500px/21px ${CJK};
`
const RefInput = styled.div`
  width: 170px;
  height: 21px;
  border: 1px solid #7a7a7a;
  background: #fff;
`
const Spin = styled.div`
  width: 101px;
  height: 21px;
  border: 1px solid #7a7a7a;
  display: flex;
  align-items: center;
  padding-left: 2px;
  font: 13.330px/19px ${MONO};
  color: #222;
`
const SpinArrows = styled.div`
  margin-left: auto;
  width: 14px;
  height: 19px;
  display: flex;
  flex-direction: column;
`
const SpinBtn = styled.div`
  flex: 1;
  background: #e1e1e1;
  border: 1px solid #adadad;
  display: flex;
  align-items: center;
  justify-content: center;
  &::after {
    content: '';
    border-left: 3px solid transparent;
    border-right: 3px solid transparent;
    ${(p) => (p.$down ? 'border-top: 4px solid #000;' : 'border-bottom: 4px solid #000;')}
  }
`
const Btn = styled.div`
  width: ${(p) => p.$w || 91}px;
  height: 26px;
  flex: none;
  background: #e1e1e1;
  border: 1px solid #adadad;
  text-align: center;
  font: 14.500px/24px ${CJK};
`
const EstimateWrap = styled.div`
  display: flex;
  justify-content: flex-end;
`
const BtnCol = styled.div`
  margin-left: 8px;
  flex: none;
  display: flex;
  flex-direction: column;
  gap: 8px;
  padding-top: 1px;
`
const CreateWrap = styled.div`
  margin-left: 8px;
  padding-top: 174px;
`
const LogDock = styled.div`
  width: 298px;
  flex: none;
  margin-left: 3px;
  display: flex;
  flex-direction: column;
`
const LogTabs = styled.div`
  display: flex;
  height: 22px;
  margin: 4px 0 0 2px;
  flex: none;
  align-items: flex-end;
`
const LogTab = styled.div`
  width: ${(p) => p.$w}px;
  height: ${(p) => (p.$on ? 22 : 21)}px;
  display: flex;
  align-items: center;
  justify-content: center;
  gap: 5px;
  font: 14.500px/20px ${CJK};
  background: ${(p) => (p.$on ? '#fff' : '#f0f0f0')};
  border: 1px solid #dcdcdc;
  border-bottom: none;
`
const LogOuter = styled.div`
  height: 230px;
  flex: none;
  margin-right: 2px;
  border: 1px solid #dcdcdc;
  padding: 1px;
  display: flex;
`
const LogBox = styled.div`
  flex: 1;
  min-width: 0;
  border: 1px solid #7a7f85;
  background: #fff;
  display: flex;
`
const LogText = styled.div`
  flex: 1;
  min-width: 0;
  padding: 0 0 0 4px;
  margin-top: -3px;
`
const LogLine = styled.div`
  height: 17px;
  font: 13.330px/17px ${MONO};
  white-space: pre;
  color: #222;
`
const Han = styled.span`
  font: 15px/17px ${CJK};
`
const StatusDock = styled.div`
  flex: 1;
  min-width: 0;
  margin-left: 6px;
  display: flex;
  flex-direction: column;
`
const StatusBody = styled.div`
  flex: 1;
  display: flex;
  padding: 21px 0 0 42px;
`
const Readouts = styled.div`
  display: flex;
  flex-direction: column;
  gap: 13px;
`
const Readout = styled.div`
  display: flex;
  align-items: center;
  height: 50px;
`
const AxisName = styled.span`
  width: 51px;
  padding-left: 5px;
  font: 33px/50px "Liberation Sans", sans-serif;
  color: #111;
`
const Lcd = styled.div`
  width: 200px;
  height: 50px;
  background: #000;
  border: 3px solid #12b3d8;
  display: flex;
  justify-content: flex-end;
  align-items: center;
  padding-right: 4px;
  overflow: hidden;
`
const LcdCell = styled.span`
  width: 19.200px;
  flex: none;
  text-align: center;
  font: 400 47px/44px Roboto, sans-serif;
  color: #22e3f2;
  -webkit-text-stroke: .5px #9fb8bc;
  transform: scaleX(.66);
`
const StatusSide = styled.div`
  margin-left: 7px;
  width: 60px;
  display: flex;
  flex-direction: column;
  align-items: center;
  margin-top: -3px;
  font: 14.500px/20px ${CJK};
`
const Led = styled.div`
  width: 20px;
  height: 20px;
  border-radius: 50%;
  background: #00f000;
`
const SideLabel = styled.div`
  margin-top: ${(p) => p.$t}px;
  height: 20px;
  white-space: nowrap;
`
const SideBtn = styled.div`
  margin-top: ${(p) => p.$t}px;
  width: 43px;
  height: 38px;
  background: #e6e6e6;
  border: 1px solid #b5b5b5;
  display: flex;
  align-items: center;
  justify-content: center;
  position: relative;
`
const StopText = styled.span`
  position: absolute;
  left: 0;
  right: 0;
  top: 9px;
  text-align: center;
  font: 700 12px/18px "Liberation Sans", sans-serif;
  color: #fff;
`
const Taskbar = styled.div`
  height: 38px;
  flex: none;
  background: linear-gradient(90deg, #22363f 0 60%, #1d2c4c 100%);
  display: flex;
  align-items: center;
  position: relative;
`
const SysSlot = styled.div`
  width: 45px;
  flex: none;
  display: flex;
  justify-content: center;
`
const TaskItem = styled.div`
  width: 46px;
  height: 38px;
  flex: none;
  display: flex;
  align-items: center;
  justify-content: center;
  background: ${(p) => (p.$on ? '#45606b' : 'transparent')};
  position: relative;
  margin-left: ${(p) => p.$ml || 0}px;
  &::after {
    content: '';
    position: absolute;
    left: 3px;
    right: 3px;
    bottom: 0;
    height: 2px;
    background: #76b9ed;
  }
`
const Tray = styled.div`
  position: absolute;
  left: 1578px;
  top: 0;
  right: 0;
  height: 38px;
  display: flex;
  align-items: center;
  color: #fff;
  font: 14px/38px ${CJK};
`
const TraySlot = styled.div`
  width: ${(p) => p.$w}px;
  flex: none;
  display: flex;
  justify-content: center;
`
const ImeBadge = styled.span`
  background: #fff;
  color: #111;
  font: 14px/18px ${CJK};
  padding: 0 2px;
`
const Watermark = styled.div`
  position: absolute;
  left: 1625px;
  top: 1021px;
  font: 38px/42px ${UI};
  color: rgba(225, 225, 225, .62);
  white-space: nowrap;
`

const menus = ['文件', '设备', '工具', '视图', '手柄', '仿真', '设置', '评定', '调试', '规划', '叶片']
const toolGroups = [
  [125, ['fileNew', 'fileOpen', 'save']],
  [236, ['robotTool', 'plug', '*monitor', '_', 'power', 'searchBlk']],
  [457, ['c1', 'c2', 'c3', 'c4', 'c5', 'c6', 'c7', 'hex', 'shield', 'wire', 'full', 'camDoc']],
  [51, ['curve']],
  [199, ['machine', 'head', 'probe', '*stylus', 'eyeBlk']],
  [199, ['arc', 'sink', 'target', '*machArrow', 'redDots']],
  [180, ['blade1', 'blade2', 'blade3', 'cutter']],
]
const treeNames = ['nv_point_12', 'nv_point_13', 'nv_point_14', 'nv_point_15', 'nv_point_16', 'nv_point_17', 'nv_point_18', 'nv_point_19', 'nv_point_24', 'nv_point_25', 'nv_point_26', 'nv_point_27', 'nv_point_28', 'nv_point_29', 'nv_point_30', 'nv_point_31', 'point_34', 'point_35', 'point_36']
const steps = [
  [25, 'pin', '快速定位: 0.194021 19.9461 9.9673...', 'move'],
  [26, 'pin', '快速定位: 0.191834 10.7297 2.1867...', 'move'],
  [27, 'dot', '测量: nv_point_12'],
  [28, 'dot', '测量: nv_point_13'],
  [29, 'dot', '测量: nv_point_14'],
  [30, 'dot', '测量: nv_point_15'],
  [31, 'dot', '测量: nv_point_19'],
  [32, 'dot', '测量: nv_point_18'],
  [33, 'dot', '测量: nv_point_17'],
  [34, 'dot', '测量: nv_point_16'],
  [35, null, '更新对齐坐标系: mutPtItr_3', 'align'],
  [36, 'axes', '激活对齐坐标系: mutPtItr_3', 'align'],
  [37, 'pin', '快速定位: -3.59963 5.95117 0.1471...', 'move'],
  [38, 'plane', '测量: plane_4'],
  [39, 'pin', '快速定位: -4.48118 6.68545 -0.448...', 'move'],
  [40, 'wave', '测量: curve_12'],
  [41, 'pin', '快速定位: -4.48118 6.68545 -0.448...', 'move'],
  [42, 'cyl', '测量: cylinder_2'],
  [43, 'plane', '测量: plane_5'],
  [44, 'pin', '快速定位: -12.9965 2.96921 1.4415...', 'move'],
  [45, 'plane', '测量: plane_6'],
  [46, 'pin', '快速定位: -6.96698 16.9084 3.4124...', 'move'],
  [47, 'pin', '快速定位: -6.96055 16.9178 187.63...', 'move'],
  [48, 'pin', '快速定位: -7.04126 -420.039 187.6...', 'move'],
  [49, 'swap', '切换工具: SP25M_170_21_1#0A10...', 'tool'],
  [50, 'pin', '快速定位: -7.05427 -15.9989 10.22...', 'move'],
]
const featureTabs = [['点', 46], ['直线', 58], ['平面', 59], ['球', 45], ['圆柱', 60], ['圆锥', 60], ['圆环', 60], ['圆', 45], ['椭圆', 60], ['圆弧', 60], ['键槽', 60], ['曲线', 60], ['曲面', 58]]
const cols = [['序号', 41, 5], ['X', 32], ['Y', 32], ['Z', 32], ['Nx', 44, 6], ['Ny', 44, 6], ['Nz', 44, 6]]
const logLines = [
  '21:56:02 迭代结束:位姿调整小于设定',
  '阈值',
  '21:56:02 Executed [评估法向耗时]',
  'in [31 ms]',
  '21:56:02 Executed [评估法向耗时]',
  'in [29 ms]',
  '21:56:03 Executed [评估法向耗时]',
  'in [46 ms]',
  '21:56:03 v_circle_1 和',
  'v_circle_2 理论距离: 10.910000实',
  '际距离: 7.636842',
]
const rightIcons = ['colorCube', 'wrench', 'chat', 'rotate', 'ptsSurf', 'cyl2', 'surf', 'boxFace', 'boxPt', 'dotsEll', 'dotsRect', 'hand', 'boxTags', 'measure', 'eye']
const tinted = ['colorCube', 'wrench', 'chat']
const withCaret = ['chat', 'eye']
const whiteLines = [
  [370, 560, 1176, 385], [345, 608, 1145, 435], [318, 672, 1110, 498], [320, 800, 835, 688], [330, 935, 825, 828],
  [338, 1000, 835, 895], [358, 1095, 850, 990], [378, 1205, 875, 1098], [382, 1235, 878, 1130], [385, 1270, 878, 1162],
  [370, 1430, 862, 1325], [365, 1442, 862, 1335],
]
const redBands = ['#5e0000', '#7a0000', '#9c0000', '#c00000', '#e00000', '#ff1a1a', '#ff4040', '#ff6a6a', '#ff9090', '#ff9090', '#ff6a6a', '#ff4040', '#ff1a1a', '#e00000', '#c00000', '#a00000']

const ToolIcon = ({ name }) => {
  if (name === '_') return <ToolGap />
  const on = name[0] === '*'
  return <ToolBtn $on={on}><Ico n={on ? name.slice(1) : name} /></ToolBtn>
}

const LogContent = ({ text }) => (
  <LogLine>
    {text.split(/([\u4e00-\u9fff]+)/).map((part, i) => (i % 2 ? <Han key={i}>{part}</Han> : part))}
  </LogLine>
)

const LcdValue = ({ value }) => (
  <Lcd>{value.split('').map((c, i) => <LcdCell key={i}>{c}</LcdCell>)}</Lcd>
)

const Dock = ({ title, right = 5 }) => (
  <DockBar $r={right}>
    <DockTitle>{title}</DockTitle>
    <Ico n="float" s={11} />
    <Ico n="close" s={10} />
  </DockBar>
)

const Scene = () => {
  const bands = redBands.map((c, i) => {
    const a = i / redBands.length
    const b = (i + 1) / redBands.length
    const near = (t) => Math.pow(t, 1.4)
    const pts = [
      [752, 1500 + 45 * near(a)], [970, 1460 + 85 * near(a)], [1568, 1200 + 345 * a],
      [1568, 1200 + 345 * b], [970, 1460 + 85 * near(b)], [752, 1500 + 45 * near(b)],
    ]
    return <polygon key={c + i} points={pts.map((p) => p.join(',')).join(' ')} fill={c} stroke={c} />
  })
  return (
    <ViewSvg viewBox="0 22 1568 1523" preserveAspectRatio="none">
      <defs>
        <linearGradient id="sky" x1="0" y1="0" x2="0" y2="1">
          <stop offset="0" stopColor="#007f7d" />
          <stop offset=".5" stopColor="#83bdb7" />
          <stop offset="1" stopColor="#fbf8ee" />
        </linearGradient>
        <linearGradient id="dark" x1="0" y1="0" x2="0" y2="1">
          <stop offset="0" stopColor="#3c3c3c" />
          <stop offset=".24" stopColor="#2a2a2a" />
          <stop offset=".45" stopColor="#3a3a3a" />
          <stop offset="1" stopColor="#2b2b2b" />
        </linearGradient>
        <linearGradient id="fillet" x1="0" y1="0" x2="0" y2="1">
          <stop offset="0" stopColor="#1c5228" />
          <stop offset=".2" stopColor="#256a33" />
          <stop offset=".5" stopColor="#3aa855" />
          <stop offset="1" stopColor="#45c060" />
        </linearGradient>
        <radialGradient id="ball" cx=".45" cy=".35" r=".7">
          <stop offset="0" stopColor="#ff3030" />
          <stop offset="1" stopColor="#a00000" />
        </radialGradient>
      </defs>
      <rect x="0" y="22" width="1568" height="1523" fill="url(#sky)" />
      <path d="M187 752C140 830 125 950 130 1020C140 1130 170 1220 212 1262" fill="none" stroke="#5050f0" strokeWidth="2.400" />
      <path d="M0 1117L220 1010" stroke="#1515e0" strokeWidth="1" />
      <path d="M680 1400L712 1495" stroke="#1515e0" strokeWidth="1" />
      <path d="M78 178L1176 245L1185 382C1160 420 1130 450 1115 490L1105 525L915 570C860 600 825 700 825 800C825 880 850 980 860 1040C875 1120 885 1200 878 1270C875 1320 850 1360 835 1380L340 1490C370 1440 385 1380 385 1310C385 1220 355 1100 340 1000C325 880 315 780 315 700L368 562C340 490 310 450 280 430L100 355L90 345Z" fill="url(#dark)" stroke="#9a9a9a" strokeWidth="1" />
      <polygon points="0,203 78,178 90,345 0,372" fill="#4ad56d" />
      <path d="M0 372L100 355L280 430C315 455 345 500 368 562L315 700L100 745C85 680 60 600 0 525Z" fill="url(#fillet)" />
      <path d="M175 730L315 700C315 780 325 880 340 1000C355 1100 385 1220 385 1310C385 1380 370 1440 342 1490L292 1500L245 1450C225 1400 212 1320 212 1200C215 1100 222 1050 220 1000C220 900 215 830 190 760Z" fill="#4ad56d" />
      {whiteLines.map((l, i) => <line key={i} x1={l[0]} y1={l[1]} x2={l[2]} y2={l[3]} stroke="#c4c4c4" strokeWidth="1" />)}
      <path d="M347 1045L840 940M366 1140L860 1038" stroke="#5050f0" strokeWidth="3" />
      <path d="M0 372L120 347" stroke="#5050f0" strokeWidth="1.500" />
      <path d="M750 510C840 510 915 700 913 860C910 1020 850 1165 780 1165C720 1165 660 1060 635 960C610 860 615 700 660 590C680 540 715 510 750 510" fill="none" stroke="#5050f0" strokeWidth="2.600" />
      <path d="M780 472L735 515L635 605C610 640 600 700 605 750L620 900C630 970 665 1060 690 1130C705 1220 695 1300 660 1370" fill="none" stroke="#5050f0" strokeWidth="2.600" />
      <path d="M765 538L640 650L625 700L632 850C650 950 690 1050 715 1160C722 1250 715 1320 680 1405" fill="none" stroke="#ee1010" strokeWidth="2" strokeDasharray="3 1" />
      <path d="M765 538L797 722" stroke="#ee1010" strokeWidth="1" />
      <path d="M797 725L550 845" stroke="#1515e0" strokeWidth="1" />
      <path d="M640 1030L665 1024L665 1018L682 1026L665 1036L665 1032Z" fill="#32d038" stroke="#1a9a20" />
      <ellipse cx="57" cy="242" rx="5" ry="7" fill="#c01818" />
      <ellipse cx="567" cy="1443" rx="5" ry="6" fill="#c01818" />
      {bands}
      <path d="M688 1545C690 1505 715 1487 733 1487C750 1490 758 1515 750 1545Z" fill="url(#ball)" />
      <path d="M57 1385V1435" stroke="#c02020" strokeWidth="2" />
      <path d="M57 1385l-6 14h12z" fill="#c02020" />
      <path d="M57 1395l24 44H40z" fill="#a8a8a8" opacity=".7" />
      <path d="M57 1437H90" stroke="#28b030" strokeWidth="3" />
      <path d="M57 1437L46 1450" stroke="#2030e0" strokeWidth="3" />
    </ViewSvg>
  )
}

export default function App() {
  return (
    <Screen>
      <Global />
      <ProgressLine />
      <TitleBar>
        <Ico n="ws" s={21} />
        <AppName>WS17-5J</AppName>
        <WinBtns>
          <WinBtn><Ico n="minimize" s={12} /></WinBtn>
          <WinBtn><Ico n="restore" s={14} /></WinBtn>
          <WinBtn><Ico n="thinClose" s={14} /></WinBtn>
        </WinBtns>
      </TitleBar>
      <MenuBar>
        {menus.map((m) => <MenuItem key={m}>{m}</MenuItem>)}
      </MenuBar>
      <Toolbar>
        {toolGroups.map(([w, names], i) => (
          <ToolGroup key={i} $w={w}>
            {names.map((name, j) => <ToolIcon key={j} name={name} />)}
          </ToolGroup>
        ))}
      </Toolbar>

      <Main>
        <LeftDock>
          <Dock title="双数据区" right={6} />
          <DualRow>
            <DataPanel>
              <IconBar>
                <IconBtn $on><Ico n="data" /></IconBtn>
                <IconBtn><Ico n="axes" /></IconBtn>
                <IconBtn><Ico n="tree" /></IconBtn>
                <IconBtn><Ico n="probe" /></IconBtn>
                <IconBtn><Ico n="reportOff" /></IconBtn>
                <IconBtn><Ico n="compass" /></IconBtn>
              </IconBar>
              <Framed>
                <TreeMain>
                  <TreeHead>
                    <HeadCell $w={129}>理论</HeadCell>
                    <HeadCell>实际</HeadCell>
                  </TreeHead>
                  {treeNames.map((name) => (
                    <TreeRow key={name}>
                      <TreeName $dim>{name}</TreeName>
                      <TreeReal $dim>{name}</TreeReal>
                    </TreeRow>
                  ))}
                  <GroupRow><Chevron><Ico n="chevR" s={12} /></Chevron><Ico n="wave" s={18} />曲线</GroupRow>
                  <GroupRow><Chevron><Ico n="chevR" s={12} /></Chevron><Ico n="line" s={18} />直线</GroupRow>
                  <GroupRow><Chevron $open><Ico n="chevD" s={12} /></Chevron><Ico n="disc" s={18} />圆</GroupRow>
                  <TreeRow $sel><TreeName>v_circle_1</TreeName><TreeReal>v_circle_1</TreeReal></TreeRow>
                  <TreeRow><TreeName>v_circle_2</TreeName><TreeReal>v_circle_2</TreeReal></TreeRow>
                </TreeMain>
                <Track $w={19}>
                  <Arrow><Ico n="chev" s={12} /></Arrow>
                  <Thumb $top={70} $h={202} />
                  <Arrow $end><Ico n="chevD" s={12} /></Arrow>
                </Track>
              </Framed>
            </DataPanel>

            <DataPanel>
              <IconBar>
                <IconBtn><Ico n="dataOff" /></IconBtn>
                <IconBtn><Ico n="axes" /></IconBtn>
                <IconBtn><Ico n="tree" /></IconBtn>
                <IconBtn><Ico n="probe" /></IconBtn>
                <IconBtn $on><Ico n="report" /></IconBtn>
                <IconBtn><Ico n="compass" /></IconBtn>
              </IconBar>
              <FramedCol>
                <PlayBar>
                  <PlayBtn><Ico n="play" s={24} /></PlayBtn>
                  <PlayBtn><Ico n="record" /></PlayBtn>
                  <PlayBtn><Ico n="steps" /></PlayBtn>
                  <PlayBtn><Ico n="trash" /></PlayBtn>
                  <PlayBtn><Ico n="mag" /></PlayBtn>
                  <PlayBtn><Ico n="docC" /></PlayBtn>
                </PlayBar>
                <ProgramRow>
                  <SideStrip>
                    <StripBtn $on><Ico n="robot" s={26} /></StripBtn>
                    <StripBtn><Ico n="joy" s={26} /></StripBtn>
                    <StripBtn><Ico n="note" s={26} /></StripBtn>
                    <StripBtn><Ico n="pencil" s={26} /></StripBtn>
                  </SideStrip>
                  <ProgramBox>
                    <ProgramList>
                      {steps.map(([no, icon, text, kind]) => (
                        <StepRow key={no} $sel={no === 40} $cur={no === 50}>
                          <Gutter $sel={no === 40} $cur={no === 50} />
                          <StepNo>{no}</StepNo>
                          {icon && <StepIcon><Ico n={icon} s={20} /></StepIcon>}
                          <StepText $k={kind} $bare={!icon}>{text}</StepText>
                        </StepRow>
                      ))}
                    </ProgramList>
                    <Track $w={20}>
                      <Arrow><Ico n="chev" s={12} /></Arrow>
                      <Thumb $top={159} $h={161} />
                      <Arrow $end><Ico n="chevD" s={12} /></Arrow>
                    </Track>
                  </ProgramBox>
                </ProgramRow>
              </FramedCol>
            </DataPanel>
          </DualRow>
        </LeftDock>

        <CenterDock>
          <ViewTabs>
            <ViewTab $on $w={90}>模型视图</ViewTab>
            <ViewTab $w={85}>报告视图</ViewTab>
          </ViewTabs>
          <ViewRow>
            <Viewport>
              <Scene />
              <AxisLabel $x={33} $y={518} $c="#e02020">Z</AxisLabel>
              <AxisLabel $x={63} $y={544} $c="#28c030">Y</AxisLabel>
              <AxisLabel $x={494} $y={378} $c="#28c030">Y</AxisLabel>
            </Viewport>
            <RightBar>
              {rightIcons.map((n) => (
                <RightItem key={n} $left={withCaret.includes(n)}>
                  <IconTint $tint={tinted.includes(n)}><Ico n={n} /></IconTint>
                  {withCaret.includes(n) && <Caret />}
                </RightItem>
              ))}
            </RightBar>
          </ViewRow>
        </CenterDock>
      </Main>

      <Bottom>
        <SettingsDock>
          <Dock title="设置" right={4} />
          <SettingsBody>
            <CategoryGrid>
              <CategoryBtn>特征<br />操作</CategoryBtn>
              <CategoryBtn $on>特征<br />创建</CategoryBtn>
              <CategoryBtn>测头</CategoryBtn>
              <CategoryBtn>量规</CategoryBtn>
              <CategoryBtn>坐标系</CategoryBtn>
              <CategoryBtn>设备</CategoryBtn>
            </CategoryGrid>
            <TabWidget>
              <TabRow>
                {featureTabs.map(([label, w], i) => <FeatureTab key={label} $w={w} $on={i === 0}>{label}</FeatureTab>)}
              </TabRow>
              <TabPanel>
                <FeatureTable>
                  {cols.map(([label, w, pad]) => <ColHead key={label} $w={w} $pad={pad}>{label}</ColHead>)}
                </FeatureTable>
                <FormCol>
                  <FormRow>参考<RefInput /></FormRow>
                  <FormRow>
                    点在面上阈值
                    <Spin>
                      0.00500
                      <SpinArrows><SpinBtn /><SpinBtn $down /></SpinArrows>
                    </Spin>
                  </FormRow>
                  <EstimateWrap><Btn>估计法向</Btn></EstimateWrap>
                </FormCol>
                <BtnCol>
                  <Btn>手动测量</Btn>
                  <Btn>添加选中</Btn>
                  <Btn>导入</Btn>
                  <Btn>新建</Btn>
                  <Btn>从特征</Btn>
                </BtnCol>
                <CreateWrap><Btn>创建</Btn></CreateWrap>
              </TabPanel>
            </TabWidget>
            <StatusDivider />
          </SettingsBody>
        </SettingsDock>

        <LogDock>
          <Dock title="运行日志" right={1} />
          <LogTabs>
            <LogTab $w={77}><Ico n="err" s={15} />错误</LogTab>
            <LogTab $w={78}><Ico n="warn" s={15} />警告</LogTab>
            <LogTab $w={79} $on><Ico n="info" s={15} />消息</LogTab>
          </LogTabs>
          <LogOuter>
            <LogBox>
              <LogText>
                {logLines.map((line, i) => <LogContent key={i} text={line} />)}
              </LogText>
              <Track $w={19}>
                <Arrow><Ico n="chev" s={12} /></Arrow>
                <Thumb $top={160} $h={22} />
                <Arrow $end><Ico n="chevD" s={12} /></Arrow>
              </Track>
            </LogBox>
          </LogOuter>
        </LogDock>

        <StatusDock>
          <Dock title="状态" right={3} />
          <StatusBody>
            <Readouts>
              <Readout><AxisName>X</AxisName><LcdValue value="0.0086" /></Readout>
              <Readout><AxisName>Y</AxisName><LcdValue value="2.6112" /></Readout>
              <Readout><AxisName>Z</AxisName><LcdValue value="-3.3518" /></Readout>
            </Readouts>
            <StatusSide>
              <Led />
              <SideLabel $t={3}>设备状态</SideLabel>
              <SideBtn $t={10}><Ico n="stop" s={33} /><StopText>STOP</StopText></SideBtn>
              <SideLabel $t={4}>停止运行</SideLabel>
              <SideBtn $t={9}><Ico n="reset" s={33} /></SideBtn>
              <SideLabel $t={4}>状态复位</SideLabel>
            </StatusSide>
          </StatusBody>
        </StatusDock>
      </Bottom>

      <Taskbar>
        <SysSlot><Ico n="winLogo" s={22} /></SysSlot>
        <SysSlot><Ico n="tbSearch" s={22} /></SysSlot>
        <SysSlot><Ico n="taskView" s={22} /></SysSlot>
        <TaskItem $ml={3}><Ico n="folder" s={24} /></TaskItem>
        <TaskItem><Ico n="calc" s={24} /></TaskItem>
        <TaskItem><Ico n="wechat" s={24} /></TaskItem>
        <TaskItem $on><Ico n="ws" s={24} /></TaskItem>
        <TaskItem><Ico n="wps" s={24} /></TaskItem>
        <TaskItem><Ico n="app" s={24} /></TaskItem>
        <TaskItem><Ico n="photos" s={24} /></TaskItem>
        <TaskItem><Ico n="ws" s={24} /></TaskItem>
        <Tray>
          <TraySlot $w={20}><Ico n="trayUp" s={16} /></TraySlot>
          <TraySlot $w={36}><Ico n="trayNet" s={20} /></TraySlot>
          <TraySlot $w={36}><Ico n="trayDoc" s={18} /></TraySlot>
          <TraySlot $w={50}><Ico n="trayWifi" s={20} /></TraySlot>
          <TraySlot $w={36}>英</TraySlot>
          <TraySlot $w={36}><ImeBadge>拼</ImeBadge></TraySlot>
          <TraySlot $w={68}>21:56</TraySlot>
          <TraySlot $w={50}><Ico n="trayMsg" s={20} /></TraySlot>
        </Tray>
      </Taskbar>
      <Watermark>CSDN @山涧果子</Watermark>
    </Screen>
  )
}
